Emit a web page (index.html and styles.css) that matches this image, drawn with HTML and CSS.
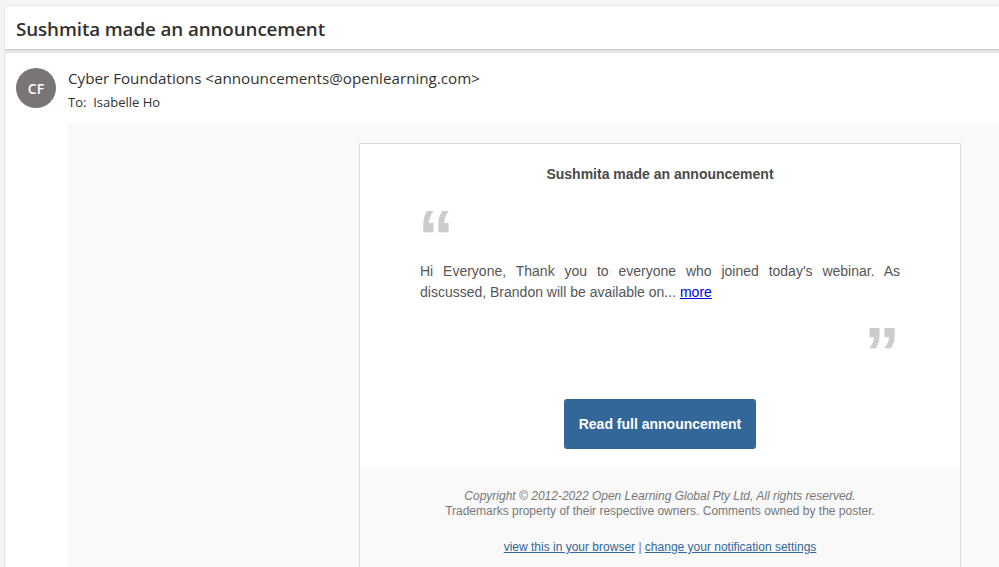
FILE: index.html
```html
<!DOCTYPE html>
<html lang="en">
<head>
  <meta charset="UTF-8" />
  <title>Sushmita made an announcement</title>
  <link rel="stylesheet" href="styles.css">
</head>
<body>
  <div class="subject">Sushmita made an announcement</div>
  <div class="message">
    <div class="sender">
      <div class="avatar">CF</div>
      <div class="sender-info">
        <div class="from">Cyber Foundations &lt;announcements@openlearning.com&gt;</div>
        <div class="to">To:&nbsp; Isabelle Ho</div>
      </div>
    </div>
    <div class="mail-body">
      <div class="mail-card">
        <div class="mail-content">
          <div class="mail-title">Sushmita made an announcement</div>
          <div class="quote-open">&ldquo;</div>
          <p class="excerpt">Hi Everyone, Thank you to everyone who joined today's webinar. As discussed, Brandon will be available on... <a href="#">more</a></p>
          <div class="quote-close">&rdquo;</div>
          <div class="action">
            <a class="btn" href="#">Read full announcement</a>
          </div>
        </div>
        <div class="mail-footer">
          <div class="copyright">Copyright &copy; 2012-2022 Open Learning Global Pty Ltd, All rights reserved.</div>
          <div>Trademarks property of their respective owners. Comments owned by the poster.</div>
          <div class="links"><a href="#">view this in your browser</a> | <a href="#">change your notification settings</a></div>
        </div>
      </div>
    </div>
  </div>
</body>
</html>
```

FILE: styles.css
```css
body {
  margin: 0;
  padding: 5px 0 0 4px;
  background-color: #f5f4f3;
  font-family: "Open Sans", "Noto Sans", sans-serif;
  color: #323130;
  overflow: hidden;
  height: 562px;
}
.subject {
  background: #fff;
  border: 1px solid #e8e6e4;
  border-right: none;
  border-bottom: 2px solid #d6d4d2;
  border-radius: 4px 0 0 0;
  height: 43px;
  line-height: 47px;
  padding-left: 11px;
  font-size: 18.8px;
  font-weight: 600;
  letter-spacing: -0.1px;
}
.message {
  background: #fff;
  border-left: 1px solid #e1dfdd;
  border-top: 1px solid #e1dfdd;
  margin-top: 1px;
  height: 520px;
}
.sender {
  display: flex;
  padding: 15px 0 0 11px;
}
.avatar {
  width: 40px;
  height: 40px;
  border-radius: 50%;
  background: #7a7574;
  color: #fff;
  font-size: 14px;
  font-weight: 600;
  display: flex;
  align-items: center;
  justify-content: center;
}
.sender-info {
  margin-left: 12px;
}
.from {
  font-size: 15.2px;
  line-height: 21px;
}
.to {
  font-size: 13px;
  line-height: 18px;
  margin-top: 4px;
}
.mail-body {
  margin: 12px 0 0 63px;
  background: #f9f9f9;
  padding-top: 20px;
  padding-left: 291px;
  height: 460px;
}
.mail-card {
  width: 600px;
  border: 1px solid #dcdcdc;
  background: #fff;
  font-family: "Liberation Sans", Arial, sans-serif;
}
.mail-content {
  padding: 22px 60px 20px 60px;
}
.mail-title {
  text-align: center;
  font-size: 14px;
  font-weight: bold;
  color: #4a4a4a;
}
.quote-open, .quote-close {
  font-size: 72px;
  font-weight: bold;
  color: #cccccc;
  height: 40px;
  line-height: 72px;
}
.quote-open {
  margin-top: 18px;
  margin-left: -2px;
}
.quote-close {
  text-align: right;
  margin-top: 14px;
}
.excerpt {
  margin: 21px 0 0 0;
  font-size: 14px;
  line-height: 21px;
  color: #555555;
  text-align: justify;
}
.excerpt a {
  color: #0000ee;
}
.action {
  text-align: center;
  margin-top: 42px;
}
.btn {
  display: inline-block;
  background: #336699;
  color: #fff;
  font-size: 14px;
  font-weight: bold;
  text-decoration: none;
  padding: 17px 15px;
  border-radius: 3px;
}
.mail-footer {
  background: #f9f9f9;
  text-align: center;
  font-size: 12px;
  line-height: 15px;
  color: #777777;
  padding-top: 20px;
  height: 100px;
}
.copyright {
  font-style: italic;
}
.links {
  margin-top: 21px;
}
.links a {
  color: #336699;
}
```
